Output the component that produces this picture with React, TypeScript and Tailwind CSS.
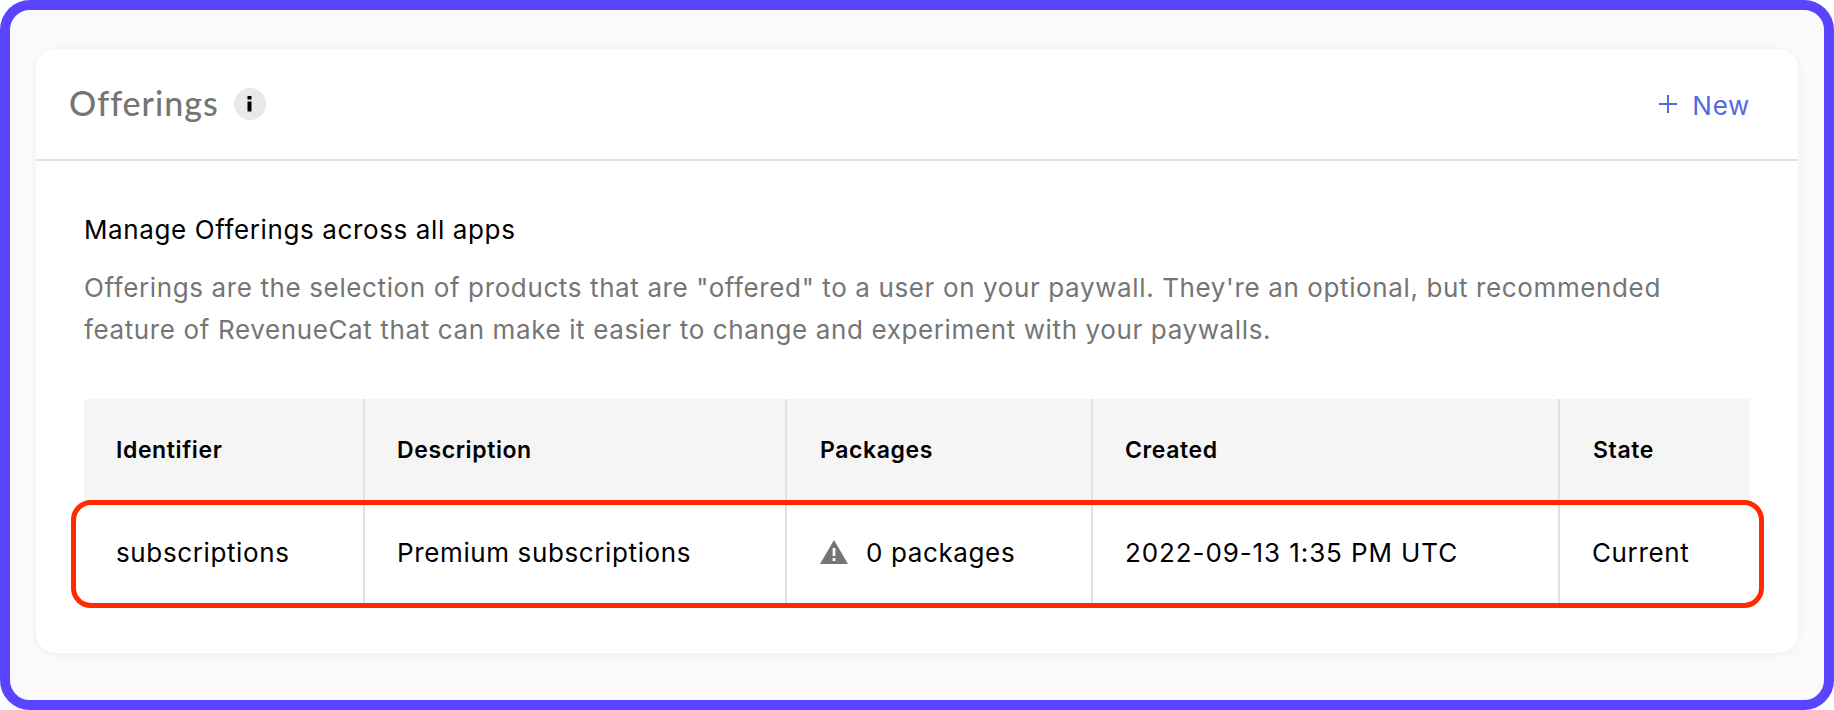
const columns = [
  { title: 'Identifier', width: 'w-[281px]', pad: 'pl-[32px]' },
  { title: 'Description', width: 'w-[422px]', pad: 'pl-[32px]' },
  { title: 'Packages', width: 'w-[306px]', pad: 'pl-[33px]' },
  { title: 'Created', width: 'w-[467px]', pad: 'pl-[32px]' },
  { title: 'State', width: 'flex-1', pad: 'pl-[33px]' },
]

function App() {
  return (
    <div className="h-[710px] w-[1834px] overflow-hidden rounded-[30px] border-[10px] border-[#5944ff] bg-[#fafafa] px-[26px] pt-[39px] font-['Inter',sans-serif]">
      <div className="h-[604px] rounded-[20px] bg-white shadow-[0_1px_8px_rgba(0,0,0,0.05)]">
        <header className="flex h-[112px] items-center justify-between border-b-2 border-[#e2e2e2] pl-[33px] pr-[48px]">
          <div className="flex items-center gap-[15px]">
            <h1 className="mt-[-4px] font-['Lato',sans-serif] text-[34px] font-medium tracking-[1px] text-[#757575]">Offerings</h1>
            <span className="flex h-8 w-8 items-center justify-center rounded-full bg-[#e9e9e9]">
              <svg width="6" height="16" viewBox="0 0 6 16" fill="#000">
                <rect x="0.5" y="0" width="4" height="3.5" />
                <rect x="0.5" y="5.5" width="4" height="10" />
              </svg>
            </span>
          </div>
          <button type="button" className="flex items-center gap-[14px] text-[26px] tracking-[0.7px] text-[#5469e0]">
            <svg width="20" height="20" viewBox="0 0 20 20" stroke="#5469e0" strokeWidth="2">
              <path d="M10 1v18M1 10h18" />
            </svg>
            <span className="mt-[3px]">New</span>
          </button>
        </header>

        <div className="px-[48px] pt-[48px] text-[26px] tracking-[0.62px]">
          <h2 className="leading-[42px] text-black">Manage Offerings across all apps</h2>
          <p className="mt-[16px] leading-[42px] text-[#757575]">
            Offerings are the selection of products that are "offered" to a user on your paywall. They're an optional, but recommended
            <br />
            feature of RevenueCat that can make it easier to change and experiment with your paywalls.
          </p>

          <div className="relative mt-[48px] text-black">
            <div className="flex h-[104px] bg-[#f5f5f5]">
              {columns.map((c, i) => (
                <div
                  key={c.title}
                  className={`flex items-center pb-[2px] text-[23px] font-semibold tracking-[0.6px] ${c.pad} ${c.width} ${i < 4 ? 'border-r-2 border-[#e0e0e0]' : ''}`}
                >
                  {c.title}
                </div>
              ))}
            </div>
            <div className="flex h-[102px] bg-white">
              <div className="flex w-[281px] items-center border-r-2 border-[#e0e0e0] pb-[4px] pl-[32px]">subscriptions</div>
              <div className="flex w-[422px] items-center border-r-2 border-[#e0e0e0] pb-[4px] pl-[32px]">Premium subscriptions</div>
              <div className="flex w-[306px] items-center gap-[18px] border-r-2 border-[#e0e0e0] pb-[4px] pl-[33px]">
                <svg width="28" height="24" viewBox="0 0 28 24">
                  <path fill="#757575" fillRule="evenodd" d="M14 0 28 24H0ZM12.6 8v8h2.8V8Zm0 10v3h2.8v-3Z" />
                </svg>
                0 packages
              </div>
              <div className="flex w-[467px] items-center border-r-2 border-[#e0e0e0] pb-[4px] pl-[32px] tracking-[0.9px]">2022-09-13 1:35 PM UTC</div>
              <div className="flex flex-1 items-center pb-[4px] pl-[32px]">Current</div>
            </div>
            {/* annotation drawn over the row */}
            <div className="absolute left-[-13px] right-[-14px] top-[101px] h-[108px] rounded-[20px] border-[5px] border-[#ff2a00]" />
          </div>
        </div>
      </div>
    </div>
  )
}

export default App
